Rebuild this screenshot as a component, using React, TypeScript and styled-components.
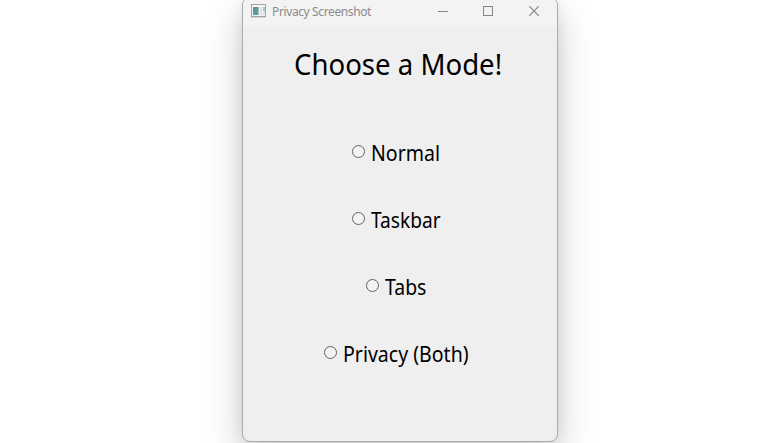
import React from "react";
import styled, { createGlobalStyle } from "styled-components";

const GlobalStyle = createGlobalStyle`
  * { box-sizing: border-box; }
  html, body, #root { margin: 0; height: 100%; overflow: hidden; }
  body { background: #fff; font-family: "Noto Sans", "Open Sans", sans-serif; color: #000; }
`;

const Desktop = styled.main`
  height: 443px;
  width: 775px;
  overflow: hidden;
  padding-left: 242px;
  display: flex;
  align-items: flex-start;
`;

const Window = styled.section`
  flex: none;
  width: 316px;
  height: 445px;
  margin-top: -3px;
  border: 1px solid #acacac;
  border-radius: 8px;
  background: #efefef;
  overflow: hidden;
  box-shadow: 0 16px 38px rgba(0, 0, 0, 0.2), 0 2px 14px rgba(0, 0, 0, 0.08);
`;

const TitleBar = styled.header`
  display: flex;
  align-items: center;
  height: 29px;
  padding: 0 0 1px 8px;
  background: #f3f3f3;
  color: #8c8c8c;
`;

const Title = styled.span`
  flex: 1;
  margin-left: 6px;
  font-size: 12px;
  line-height: 16px;
  letter-spacing: -0.38px;
  white-space: nowrap;
`;

const Controls = styled.div`
  display: flex;
`;

const ControlButton = styled.button<{ $width: number }>`
  display: flex;
  align-items: center;
  justify-content: center;
  width: ${(p) => p.$width}px;
  height: 28px;
  padding: 0 0 2px;
  border: 0;
  background: none;
  color: #858585;
`;

const Heading = styled.h1`
  margin: 15px 0 0 51px;
  font-size: 29.5px;
  line-height: 44px;
  font-weight: 400;
  white-space: nowrap;
  transform: scaleX(0.935);
  transform-origin: left;
`;

const Options = styled.div`
  display: grid;
  grid-auto-rows: 67px;
  margin-top: 33px;
`;

const Option = styled.label<{ $indent: number }>`
  display: flex;
  align-items: center;
  padding-left: ${(p) => p.$indent}px;
  font-size: 21px;
  line-height: 28px;
  white-space: nowrap;
`;

const OptionText = styled.span<{ $stretch: number }>`
  transform: scaleX(${(p) => p.$stretch});
  transform-origin: left;
`;

const Radio = styled.input`
  appearance: none;
  flex: none;
  width: 13px;
  height: 13px;
  margin: 0 6px 3px 0;
  border: 1px solid #626262;
  border-radius: 50%;
  background: #f3f3f3;
`;

const modes = [
  { label: "Normal", indent: 109, stretch: 0.93 },
  { label: "Taskbar", indent: 109, stretch: 0.91 },
  { label: "Tabs", indent: 123, stretch: 0.925 },
  { label: "Privacy (Both)", indent: 81, stretch: 0.93 },
];

const IconFrame = styled.svg`
  flex: none;
  margin-bottom: 2px;
`;

function AppIcon() {
  return (
    <IconFrame width="15" height="14" viewBox="0 0 15 14" shapeRendering="crispEdges">
      <defs>
        <linearGradient id="pane" x1="0" y1="0" x2="0.6" y2="1">
          <stop offset="0" stopColor="#5c8bb0" />
          <stop offset="1" stopColor="#5aa688" />
        </linearGradient>
      </defs>
      <rect x="0.5" y="0.5" width="14" height="12" fill="#f5f5f5" stroke="#a0a3ab" />
      <rect x="0" y="13" width="15" height="1" fill="#d3d3d3" />
      <rect x="2" y="3" width="5" height="8" fill="url(#pane)" />
      <rect x="7" y="3" width="1" height="8" fill="#a9bdc5" />
      <rect x="9" y="3" width="2" height="8" fill="#dedede" />
      <rect x="12" y="3" width="2" height="4" fill="#a7cabc" />
      <rect x="12" y="7" width="2" height="4" fill="#e3e3e3" />
    </IconFrame>
  );
}

export default function App() {
  return (
    <>
      <GlobalStyle />
      <Desktop>
        <Window>
          <TitleBar>
            <AppIcon />
            <Title>Privacy Screenshot</Title>
            <Controls>
              <ControlButton $width={44} aria-label="Minimize">
                <svg width="10" height="10" shapeRendering="crispEdges"><path d="M0 5.5H10" stroke="currentColor" /></svg>
              </ControlButton>
              <ControlButton $width={46} aria-label="Maximize">
                <svg width="10" height="10" shapeRendering="crispEdges"><rect x="0.5" y="0.5" width="9" height="9" fill="none" stroke="currentColor" /></svg>
              </ControlButton>
              <ControlButton $width={46} aria-label="Close">
                <svg width="10" height="10"><path d="M.3 .3L9.7 9.7M9.7 .3L.3 9.7" stroke="currentColor" strokeWidth="1.2" /></svg>
              </ControlButton>
            </Controls>
          </TitleBar>
          <Heading>Choose a Mode!</Heading>
          <Options>
            {modes.map((m) => (
              <Option key={m.label} $indent={m.indent}>
                <Radio type="radio" name="mode" />
                <OptionText $stretch={m.stretch}>{m.label}</OptionText>
              </Option>
            ))}
          </Options>
        </Window>
      </Desktop>
    </>
  );
}
